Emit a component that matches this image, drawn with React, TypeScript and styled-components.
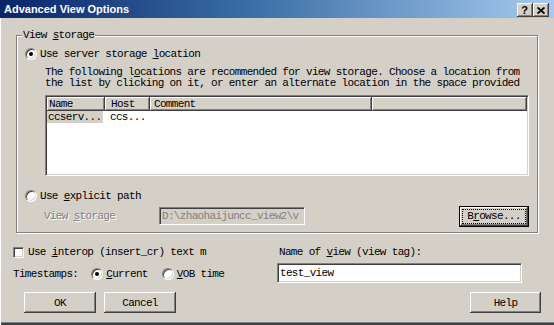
import React from 'react'
import styled, { createGlobalStyle } from 'styled-components'

const face = '#d4d0c8'
const shadow = '#808080'
const dark = '#404040'

const raised = `inset -1px -1px ${dark}, inset 1px 1px #fff, inset -2px -2px ${shadow}, inset 2px 2px ${face}`

const GlobalStyle = createGlobalStyle`
  * { box-sizing: border-box; }
  html, body { margin: 0; padding: 0; background: ${face}; }
  body {
    font-family: 'Liberation Mono', 'DejaVu Sans Mono', monospace;
    font-size: 11px;
    letter-spacing: -0.67px;
    color: #000;
  }
`

const Window = styled.div`
  width: 554px;
  height: 325px;
  background: ${face};
  display: flex;
  flex-direction: column;
  overflow: hidden;
  box-shadow: inset 1px 0 #fff, inset 0 -2px ${dark}, inset 0 -3px ${shadow};
`

const TitleBar = styled.div`
  height: 18px;
  flex: none;
  display: flex;
  align-items: flex-end;
  padding: 0 5px 1px 4px;
  background: linear-gradient(to right, #0a246a 0%, #3a6ea5 45%, #a6caf0 100%);
`

const Title = styled.div`
  flex: 1;
  color: #fff;
  font: bold 11px 'Liberation Sans', Arial, sans-serif;
  letter-spacing: 0;
  line-height: 13px;
  padding-bottom: 1px;
`

const CaptionButton = styled.div`
  width: 16px;
  height: 14px;
  background: ${face};
  box-shadow: ${raised};
  display: flex;
  align-items: center;
  justify-content: center;
  font: bold 11px 'Liberation Sans', Arial, sans-serif;
  letter-spacing: 0;
  line-height: 14px;
  padding-right: 1px;
`

const GroupBox = styled.fieldset`
  margin: 11px 0 0 16px;
  width: 522px;
  min-width: 0;
  padding: 0 0 7px 0;
  border: 1px solid ${shadow};
  box-shadow: inset 1px 1px #fff, 1px 1px #fff;
`

const Legend = styled.legend`
  margin-left: 5px;
  padding: 0 1px;
  line-height: 12px;
  background: ${face};
`

const U = styled.span`
  text-decoration: underline;
`

const OptionRow = styled.label<{ $top: number; $left: number }>`
  display: flex;
  align-items: center;
  height: 12px;
  line-height: 12px;
  margin: ${p => p.$top}px 0 0 ${p => p.$left}px;
  white-space: nowrap;
`

const OptionText = styled.span`
  white-space: pre;
`

const Radio = styled.span<{ $checked?: boolean; $gap?: number }>`
  position: relative;
  flex: none;
  width: 12px;
  height: 12px;
  margin-right: ${p => p.$gap ?? 3}px;
  border-radius: 50%;
  background: #fff;
  border: 1px solid;
  border-color: ${shadow} #fff #fff ${shadow};
  box-shadow: inset 1px 1px ${dark}, inset -1px -1px ${face};
  &::after {
    content: '';
    display: ${p => (p.$checked ? 'block' : 'none')};
    position: absolute;
    left: 3px;
    top: 3px;
    width: 4px;
    height: 4px;
    border-radius: 50%;
    background: #000;
  }
`

const Check = styled.span`
  flex: none;
  width: 11px;
  height: 11px;
  margin-right: 4px;
  background: #fff;
  border: 1px solid;
  border-color: ${shadow} #fff #fff ${shadow};
  box-shadow: inset 1px 1px ${dark}, inset -1px -1px ${face};
`

const Description = styled.div`
  margin: 7px 0 0 28px;
  line-height: 11px;
  white-space: nowrap;
`

const ListView = styled.div`
  margin: 6px 0 0 28px;
  width: 484px;
  height: 81px;
  background: #fff;
  border: 1px solid;
  border-color: ${shadow} #fff #fff ${shadow};
  box-shadow: inset 1px 1px ${dark}, inset -1px -1px ${face};
  padding: 1px;
  overflow: hidden;
`

const HeaderRow = styled.div`
  display: flex;
  height: 14px;
`

const HeaderCell = styled.div<{ $w?: number; $pad: number }>`
  flex: ${p => (p.$w ? `0 0 ${p.$w}px` : '1')};
  background: ${face};
  box-shadow: inset -1px -1px ${dark}, inset 1px 1px #fff, inset -2px -2px ${shadow};
  padding-left: ${p => p.$pad}px;
  line-height: 14px;
  white-space: nowrap;
  overflow: hidden;
`

const ItemRow = styled.div`
  display: flex;
  height: 11px;
  margin-top: 1px;
  line-height: 11px;
`

const ItemCell = styled.div<{ $w: number; $selected?: boolean; $pad: number }>`
  flex: 0 0 ${p => p.$w}px;
  padding-left: ${p => p.$pad}px;
  white-space: nowrap;
  span {
    background: ${p => (p.$selected ? face : 'transparent')};
    padding: 0 2px 0 1px;
  }
`

const PathRow = styled.div`
  display: flex;
  align-items: center;
  height: 18px;
  margin: 5px 8px 0 27px;
`

const DisabledLabel = styled.div`
  flex: 0 0 115px;
  color: ${shadow};
  text-shadow: 1px 1px #fff;
  line-height: 12px;
`

const TextBox = styled.input<{ $w: number; $h: number; $disabled?: boolean }>`
  width: ${p => p.$w}px;
  height: ${p => p.$h}px;
  flex: none;
  margin: 0;
  padding: 0 2px;
  font: inherit;
  letter-spacing: inherit;
  color: ${p => (p.$disabled ? shadow : '#000')};
  background: ${p => (p.$disabled ? face : '#fff')};
  border: 1px solid;
  border-color: ${shadow} #fff #fff ${shadow};
  box-shadow: inset 1px 1px ${dark}, inset -1px -1px ${face};
  outline: none;
`

const Button = styled.button<{ $w: number; $default?: boolean }>`
  width: ${p => p.$w}px;
  height: 21px;
  flex: none;
  margin: 0;
  padding: 0;
  display: flex;
  align-items: stretch;
  justify-content: center;
  font: inherit;
  letter-spacing: inherit;
  color: #000;
  background: ${face};
  border: none;
  box-shadow: ${p =>
    p.$default
      ? `inset 0 0 0 1px #000, inset -2px -2px ${dark}, inset 2px 2px #fff, inset -3px -3px ${shadow}`
      : raised};
`

const ButtonFace = styled.span<{ $focused?: boolean }>`
  flex: 1;
  margin: 3px;
  display: flex;
  align-items: center;
  justify-content: center;
  border: 1px dotted ${p => (p.$focused ? '#000' : 'transparent')};
`

const BottomGrid = styled.div`
  display: grid;
  grid-template-columns: 264px 245px;
  margin: 13px 0 0 13px;
`

const Column = styled.div`
  display: flex;
  flex-direction: column;
`

const FieldLabel = styled.div`
  line-height: 12px;
  padding-left: 2px;
  margin-bottom: 5px;
  white-space: nowrap;
`

const InlineRow = styled.div`
  display: flex;
  align-items: center;
  height: 12px;
  line-height: 12px;
  margin-top: 10px;
  white-space: nowrap;
`

const Spaced = styled.span<{ $left: number }>`
  display: inline-flex;
  align-items: center;
  margin-left: ${p => p.$left}px;
`

const ButtonRow = styled.div`
  display: flex;
  gap: 8px;
  margin: 9px 13px 0 24px;
`

const Spacer = styled.div`
  flex: 1;
`

const CloseGlyph = () => (
  <svg width="8" height="7" viewBox="0 0 8 7">
    <path d="M0.5 0.5 L7.5 6.5 M7.5 0.5 L0.5 6.5" stroke="#000" strokeWidth="1.8" />
  </svg>
)

const App = () => (
  <>
    <GlobalStyle />
    <Window>
      <TitleBar>
        <Title>Advanced View Options</Title>
        <CaptionButton>?</CaptionButton>
        <CaptionButton>
          <CloseGlyph />
        </CaptionButton>
      </TitleBar>

      <GroupBox>
        <Legend>
          View <U>s</U>torage
        </Legend>
        <OptionRow $top={7} $left={8}>
          <Radio $checked />
          <OptionText>
            Use server storage <U>l</U>ocation
          </OptionText>
        </OptionRow>
        <Description>
          <div>
            The following l<U>o</U>cations are recommended for view storage. Choose a location from
          </div>
          <div>the list by clicking on it, or enter an alternate location in the space provided</div>
        </Description>
        <ListView>
          <HeaderRow>
            <HeaderCell $w={58} $pad={2}>Name</HeaderCell>
            <HeaderCell $w={45} $pad={6}>Host</HeaderCell>
            <HeaderCell $w={222} $pad={4}>Comment</HeaderCell>
            <HeaderCell $pad={0} />
          </HeaderRow>
          <ItemRow>
            <ItemCell $w={58} $pad={0} $selected>
              <span>ccserv...</span>
            </ItemCell>
            <ItemCell $w={45} $pad={4}>
              <span>ccs...</span>
            </ItemCell>
          </ItemRow>
        </ListView>
        <OptionRow $top={14} $left={8}>
          <Radio />
          <OptionText>
            Use <U>e</U>xplicit path
          </OptionText>
        </OptionRow>
        <PathRow>
          <DisabledLabel>
            View <U>s</U>torage
          </DisabledLabel>
          <TextBox $w={146} $h={18} $disabled readOnly value={'D:\\zhaohaijuncc_view2\\v'} />
          <Spacer />
          <Button $w={70} $default>
            <ButtonFace $focused>
              B<U>r</U>owse...
            </ButtonFace>
          </Button>
        </PathRow>
      </GroupBox>

      <BottomGrid>
        <Column>
          <OptionRow $top={0} $left={0}>
            <Check />
            <OptionText>
              Use <U>i</U>nterop (insert_cr) text m
            </OptionText>
          </OptionRow>
          <InlineRow>
            <OptionText>Timestamps:</OptionText>
            <Spaced $left={13}>
              <Radio $checked />
              <OptionText>
                <U>C</U>urrent
              </OptionText>
            </Spaced>
            <Spaced $left={14}>
              <Radio />
              <OptionText>
                <U>V</U>OB time
              </OptionText>
            </Spaced>
          </InlineRow>
        </Column>
        <Column>
          <FieldLabel>
            Name of <U>v</U>iew (view tag):
          </FieldLabel>
          <TextBox $w={245} $h={20} readOnly value="test_view" />
        </Column>
      </BottomGrid>

      <ButtonRow>
        <Button $w={72}>
          <ButtonFace>OK</ButtonFace>
        </Button>
        <Button $w={72}>
          <ButtonFace>Cancel</ButtonFace>
        </Button>
        <Spacer />
        <Button $w={71}>
          <ButtonFace>Help</ButtonFace>
        </Button>
      </ButtonRow>
    </Window>
  </>
)

export default App
